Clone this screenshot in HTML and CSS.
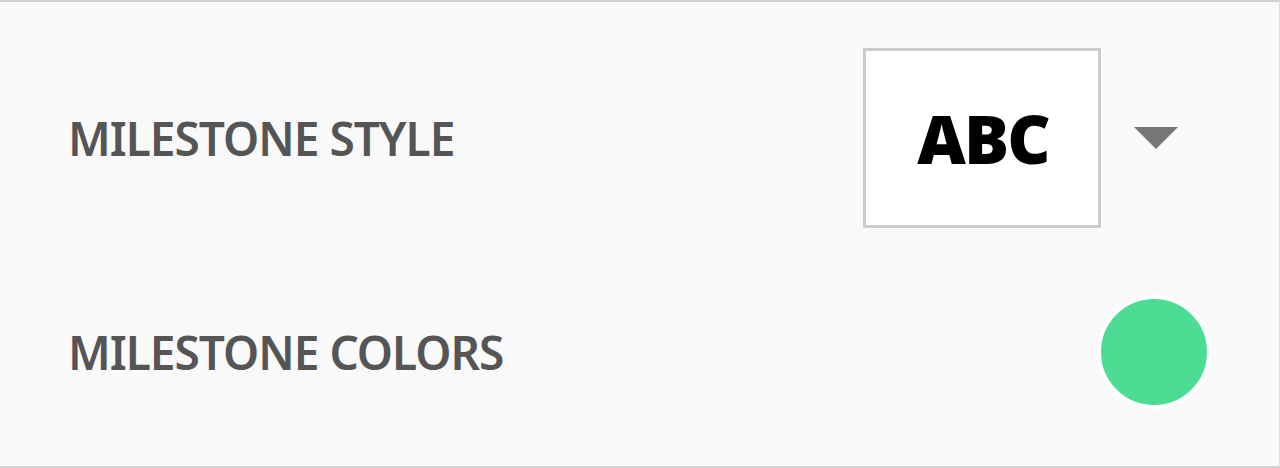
FILE: index.html
```html
<!DOCTYPE html>
<html>
<head>
<meta charset="utf-8">
<link rel="stylesheet" href="styles.css">
</head>
<body>
<div class="panel">
  <div class="row row-style">
    <div class="label">MILESTONE STYLE</div>
    <div class="control">
      <div class="style-box"><span class="abc">ABC</span></div>
      <div class="caret"></div>
    </div>
  </div>
  <div class="row row-colors">
    <div class="label">MILESTONE COLORS</div>
    <div class="swatch"></div>
  </div>
</div>
</body>
</html>
```
FILE: styles.css
```css
html, body {
  margin: 0;
  padding: 0;
  background: #f9f9f9;
}
.panel {
  box-sizing: border-box;
  width: 1280px;
  height: 468px;
  border-top: 2px solid #d2d2d2;
  border-bottom: 2px solid #d2d2d2;
  border-right: 1px solid #e0e0e0;
  background: #f9f9f9;
  font-family: "Noto Sans", "Liberation Sans", sans-serif;
}
.row {
  display: flex;
  align-items: center;
  justify-content: space-between;
  padding-left: 68px;
}
.row-style {
  padding-top: 46px;
  padding-right: 101px;
}
.row-colors {
  padding-top: 67px;
  padding-right: 68px;
}
.label {
  font-size: 46px;
  font-weight: 600;
  color: #555555;
  letter-spacing: -1px;
}
.control {
  display: flex;
  align-items: center;
  gap: 33px;
}
.style-box {
  box-sizing: border-box;
  width: 238px;
  height: 180px;
  border: 3px solid #cccccc;
  background: #ffffff;
  display: flex;
  align-items: center;
  justify-content: center;
  padding-left: 2px;
}
.abc {
  font-size: 67px;
  font-weight: 900;
  color: #000;
  letter-spacing: -2px;
}
.caret {
  width: 0;
  height: 0;
  border-left: 22px solid transparent;
  border-right: 22px solid transparent;
  border-top: 22px solid #777777;
}
.swatch {
  box-sizing: border-box;
  width: 114px;
  height: 114px;
  border-radius: 50%;
  background: #4cdc94;
  border: 4px solid #ffffff;
}
```
